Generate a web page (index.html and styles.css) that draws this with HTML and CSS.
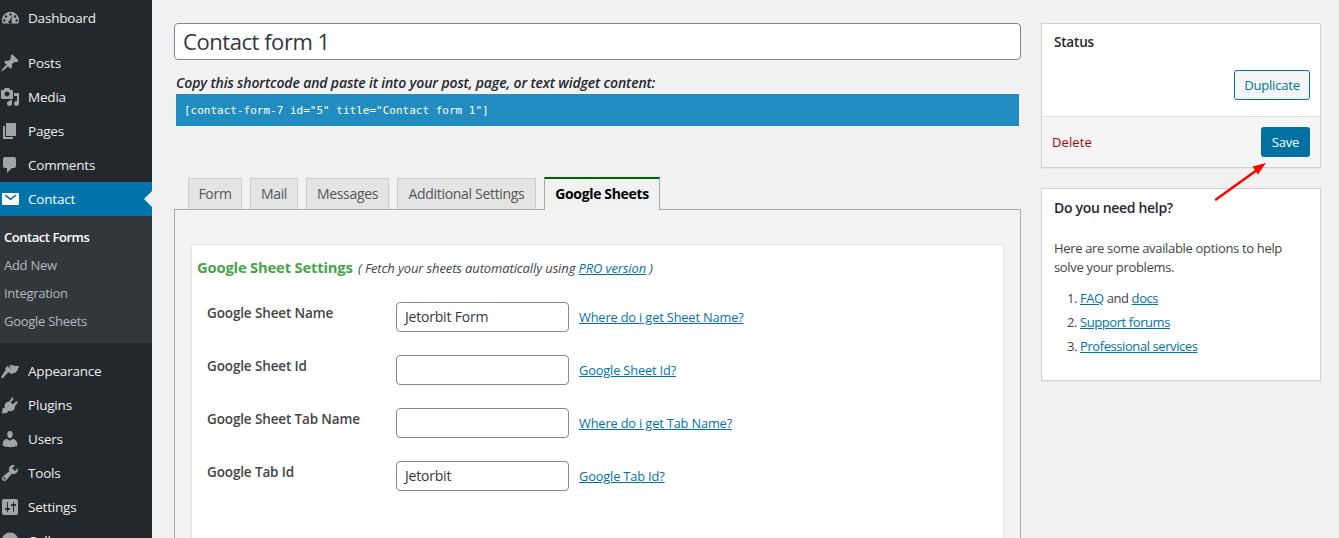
FILE: index.html
```html
<!DOCTYPE html>
<html lang="en">
<head>
<meta charset="utf-8">
<title>Edit Contact Form</title>
<link rel="stylesheet" href="styles.css">
</head>
<body>
<div class="page">
  <nav class="sidebar">
    <ul class="menu menu-dash">
      <li class="item"><svg class="ico" viewBox="0 0 20 20"><path fill-rule="evenodd" d="M2.600 15.500A8.500 8.500 0 1 1 18.400 15.500ZM10.500 5.300a1.200 1.200 0 1 0 0 2.400 1.200 1.200 0 0 0 0-2.400ZM6 7.300a1.200 1.200 0 1 0 0 2.400 1.200 1.200 0 0 0 0-2.400ZM15 7.300a1.200 1.200 0 1 0 0 2.400 1.200 1.200 0 0 0 0-2.400ZM4.300 11.300a1.200 1.200 0 1 0 0 2.400 1.200 1.200 0 0 0 0-2.400ZM16.700 11.300a1.200 1.200 0 1 0 0 2.400 1.200 1.200 0 0 0 0-2.400ZM12.300 7.800 9.600 12.500a1.700 1.700 0 1 0 1.800.5Z"/></svg>Dashboard</li>
    </ul>
    <ul class="menu">
      <li class="item"><svg class="ico" viewBox="0 0 20 20"><path d="M10.440 3.020l1.820-1.820 6.360 6.350-1.830 1.820c-1.050-.68-2.480-.57-3.410.36l-.75.75c-.92.93-1.040 2.350-.35 3.410l-1.830 1.820-2.410-2.410-2.800 2.790c-.42.42-3.380 2.710-3.800 2.290s1.860-3.390 2.280-3.810l2.790-2.790L4.100 9.360l1.830-1.820c1.050.69 2.480.57 3.400-.36l.75-.75c.93-.92 1.050-2.350.36-3.410z"/></svg>Posts</li>
      <li class="item"><svg class="ico" viewBox="0 0 20 20"><path d="M13 11V4c0-.55-.45-1-1-1h-1.670L9 1H5L3.670 3H2c-.55 0-1 .45-1 1v7c0 .55.45 1 1 1h10c.55 0 1-.45 1-1zM7 4.500c1.380 0 2.500 1.120 2.500 2.500S8.380 9.500 7 9.500 4.500 8.380 4.500 7 5.620 4.500 7 4.500zM14 6h5v10.500c0 1.380-1.120 2.500-2.500 2.500S14 17.880 14 16.500s1.120-2.500 2.500-2.500c.17 0 .34.02.5.05V9h-3V6zm-4 8.050V13h2v3.500c0 1.380-1.120 2.500-2.500 2.500S7 17.880 7 16.500 8.120 14 9.500 14c.17 0 .34.02.5.05z"/></svg>Media</li>
      <li class="item"><svg class="ico" viewBox="0 0 20 20"><path d="M6 15V2h10v13H6zm-1 1h8v2H3V5h2v11z"/></svg>Pages</li>
      <li class="item"><svg class="ico" viewBox="0 0 20 20"><path d="M5 2h9c1.100 0 2 .9 2 2v7c0 1.100-.9 2-2 2h-2l-5 5v-5H5c-1.100 0-2-.9-2-2V4c0-1.100.9-2 2-2z"/></svg>Comments</li>
      <li class="item item-active"><svg class="ico" viewBox="0 0 20 20"><path fill-rule="evenodd" d="M3 4h15a1 1 0 0 1 1 1v10a1 1 0 0 1-1 1H3a1 1 0 0 1-1-1V5a1 1 0 0 1 1-1ZM4.700 6.700 10.500 11.200 16.300 6.700 15.500 5.600 10.500 9.300 5.500 5.600Z"/></svg>Contact<span class="notch"></span></li>
    </ul>
    <ul class="submenu">
      <li class="sub sub-current">Contact Forms</li>
      <li class="sub">Add New</li>
      <li class="sub">Integration</li>
      <li class="sub">Google Sheets</li>
    </ul>
    <ul class="menu menu-lower">
      <li class="item"><svg class="ico" viewBox="0 0 20 20"><path d="M9 3.500l1.500 1 2.500-.5 1 1 2-.3 3.500.8-2 2.500.5 1.500-1.500.5-.5 1.500-1 .5-1.500-.5-1 2zM7.800 5l5.200 6.500-2 1.500-2.500-2L2.500 17.500 1 16l5-7.500-1-1z"/></svg>Appearance</li>
      <li class="item"><svg class="ico" viewBox="0 0 20 20"><path d="M12.200 2.300 13.800 3.500 10.700 7.500 13 9.300 16.500 6 18 7.300 14.800 11.500c.5 2-1 4-3 4.600-1.300.4-2.500.2-3.500-.4L7 18 2 18.500 2.500 13.500 5 12.400c-.6-1.200-.5-2.700.3-3.900C6 7.500 7 7 8 6.800L9 6.800Z"/></svg>Plugins</li>
      <li class="item"><svg class="ico" viewBox="0 0 20 20"><path d="M10 9.250c-2.270 0-2.730-3.440-2.730-3.440C7 4.020 7.820 2 9.970 2c2.160 0 2.980 2.020 2.710 3.810 0 0-.41 3.440-2.680 3.440zm0 2.570L12.720 10c2.390 0 4.520 2.330 4.520 4.530v2.490s-3.650 1.130-7.240 1.130c-3.650 0-7.240-1.130-7.240-1.130v-2.490c0-2.250 1.940-4.480 4.150-4.480z"/></svg>Users</li>
      <li class="item"><svg class="ico" viewBox="0 0 20 20"><path d="M16.680 9.770c-1.340 1.340-3.300 1.670-4.950.99l-5.410 6.520c-.99.99-2.590.99-3.580 0s-.99-2.590 0-3.570l6.520-5.420c-.68-1.650-.35-3.610.99-4.950 1.280-1.280 3.120-1.620 4.720-1.060l-2.890 2.890 2.820 2.820 2.860-2.870c.53 1.580.18 3.400-1.080 4.670zM3.810 16.210c.4.390 1.040.39 1.430 0 .4-.4.4-1.040 0-1.430-.39-.4-1.030-.4-1.430 0-.39.39-.39 1.030 0 1.430z"/></svg>Tools</li>
      <li class="item"><svg class="ico" viewBox="0 0 20 20"><path d="M18 16V4c0-1.100-.9-2-2-2H4c-1.100 0-2 .9-2 2v12c0 1.100.9 2 2 2h12c1.100 0 2-.9 2-2zM8 11h1c.55 0 1 .45 1 1s-.45 1-1 1H8v1.500c0 .28-.22.5-.5.5s-.5-.22-.5-.5V13H6c-.55 0-1-.45-1-1s.45-1 1-1h1V5.500c0-.28.22-.5.5-.5s.5.22.5.5V11zm5-2h-1c-.55 0-1-.45-1-1s.45-1 1-1h1V5.500c0-.28.22-.5.5-.5s.5.22.5.5V7h1c.55 0 1 .45 1 1s-.45 1-1 1h-1v5.500c0 .28-.22.5-.5.5s-.5-.22-.5-.5V9z"/></svg>Settings</li>
      <li class="item"><svg class="ico" viewBox="0 0 20 20"><circle cx="10" cy="10" r="8.500"/></svg>Collapse</li>
    </ul>
  </nav>

  <main class="content">
    <div class="editor">
      <div class="title-input">Contact form 1</div>
      <p class="hint">Copy this shortcode and paste it into your post, page, or text widget content:</p>
      <div class="shortcode"><code>[contact-form-7 id="5" title="Contact form 1"]</code></div>
      <div class="tabs">
        <span class="tab tab-form">Form</span>
        <span class="tab tab-mail">Mail</span>
        <span class="tab tab-msg">Messages</span>
        <span class="tab tab-add">Additional Settings</span>
        <span class="tab tab-current">Google Sheets</span>
      </div>
      <section class="panel">
        <div class="sheet">
          <h2 class="sheet-head"><span class="sheet-title">Google Sheet Settings</span> <span class="sheet-note">( Fetch your sheets automatically using <a href="#">PRO version</a> )</span></h2>
          <div class="row"><label>Google Sheet Name</label><span class="field">Jetorbit Form</span><a href="#">Where do i get Sheet Name?</a></div>
          <div class="row"><label>Google Sheet Id</label><span class="field"></span><a href="#">Google Sheet Id?</a></div>
          <div class="row"><label>Google Sheet Tab Name</label><span class="field"></span><a href="#">Where do i get Tab Name?</a></div>
          <div class="row"><label>Google Tab Id</label><span class="field">Jetorbit</span><a href="#">Google Tab Id?</a></div>
        </div>
      </section>
    </div>

    <aside class="side">
      <div class="box box-status">
        <h3 class="box-title">Status</h3>
        <div class="dup-row"><span class="btn btn-dup">Duplicate</span></div>
        <div class="actions"><a class="delete" href="#">Delete</a><span class="btn btn-save">Save</span></div>
      </div>
      <div class="box box-help">
        <h3 class="box-title box-title-help">Do you need help?</h3>
        <p class="help-text">Here are some available options to help solve your problems.</p>
        <ol class="help-list">
          <li><a href="#">FAQ</a> and <a href="#">docs</a></li>
          <li><a href="#">Support forums</a></li>
          <li><a href="#">Professional services</a></li>
        </ol>
      </div>
      <svg class="arrow" viewBox="0 0 60 50"><path d="M5 45.500 46 16" stroke="#f00" stroke-width="2.500" stroke-linecap="round" fill="none"/><path d="M55 9 41.500 12.500 47 20.500Z" fill="#f00"/></svg>
    </aside>
  </main>
</div>
</body>
</html>
```
FILE: styles.css
```css
* { box-sizing: border-box; }
html, body { margin: 0; height: 538px; overflow: hidden; }
body { background: #f1f1f1; color: #444; font-family: "Open Sans", "Noto Sans", sans-serif; font-size: 13px; letter-spacing: -0.2px; }
a { color: #0073aa; }
ul, ol { margin: 0; padding: 0; list-style: none; }
.page { display: flex; height: 538px; }

.sidebar { width: 152px; flex: none; background: #23282d; color: #eee; height: 538px; overflow: hidden; font-size: 13.500px; }
.menu-dash { margin-top: 1px; margin-bottom: 11px; }
.item { position: relative; display: flex; align-items: center; height: 34px; padding-left: 28px; color: #eee; }
.ico { position: absolute; left: 0; top: 7px; width: 20px; height: 20px; fill: #a0a5aa; }
.item-active { background: #0073aa; color: #fff; }
.item-active .ico { fill: #fff; }
.notch { position: absolute; right: 0; top: 9px; border: 8px solid transparent; border-right-color: #f1f1f1; border-left-width: 0; }
.submenu { background: #32373c; padding: 7px 0 7px; height: 127px; }
.sub { height: 28px; line-height: 28px; padding-left: 4px; color: #b4b9be; font-size: 13px; letter-spacing: -0.28px; }
.sub-current { color: #fff; font-weight: 600; letter-spacing: -0.45px; }
.menu-lower { margin-top: 11px; }

.content { flex: 1; display: flex; gap: 20px; padding: 23px 18px 0 22px; min-width: 0; }
.editor { width: 847px; flex: none; }
.title-input { height: 37px; background: #fff; border: 1px solid #7e8993; border-radius: 4px; padding: 0 8px; font-size: 22px; line-height: 35px; color: #32373c; letter-spacing: -0.45px; }
.hint { margin: 13px 0 0 2px; font-size: 14px; line-height: 19px; font-style: italic; font-weight: 600; color: #23282d; letter-spacing: -0.13px; }
.shortcode { margin: 2px 2px 0 2px; height: 32px; background: #218cc0; color: #fff; padding: 0 8px; display: flex; align-items: center; }
.shortcode code { font-family: "DejaVu Sans Mono", monospace; font-size: 11px; letter-spacing: 0; }

.tabs { display: flex; gap: 8px; padding-left: 14px; margin-top: 52px; height: 31px; position: relative; }
.tab { height: 31px; background: #e4e4e4; border: 1px solid #ccc; border-bottom: none; text-align: center; line-height: 30px; font-size: 14px; color: #555; letter-spacing: -0.32px; }
.tab-form { width: 54px; }
.tab-mail { width: 48px; }
.tab-msg { width: 83px; }
.tab-add { width: 139px; }
.tab-current { width: 116px; height: 33px; margin-top: -1px; background: #f1f1f1; border: 1px solid #aaa; border-top: 2px solid #006400; border-bottom: none; font-weight: 700; color: #000; line-height: 30px; z-index: 1; letter-spacing: -0.35px; }
.panel { border: 1px solid #aaa; border-bottom: none; background: #f3f3f3; height: 340px; padding: 34px 16px 0; }
.sheet { background: #fff; border: 1px solid #e5e5e5; height: 310px; padding: 0 5px; }
.sheet-head { margin: 12px 0 0; font-size: 14px; line-height: 20px; font-weight: 400; }
.sheet-title { color: #46a54b; font-weight: 700; font-size: 14.800px; margin-right: 2px; letter-spacing: -0.2px; }
.sheet-note { font-size: 13px; font-style: italic; color: #444; letter-spacing: -0.12px; }
.row { display: flex; align-items: flex-start; height: 53px; padding-left: 10px; }
.sheet-head + .row { margin-top: 24px; }
.row label { width: 189px; flex: none; font-weight: 600; line-height: 20px; margin-top: 1px; font-size: 13.500px; color: #444; letter-spacing: -0.13px; }
.field { width: 173px; height: 30px; flex: none; background: #fff; border: 1px solid #7e8993; border-radius: 4px; padding: 0 8px; line-height: 28px; font-size: 14px; color: #32373c; }
.row a { margin-left: 10px; line-height: 30px; font-size: 12.800px; letter-spacing: -0.15px; }

.side { position: relative; width: 280px; flex: none; font-size: 13px; }
.box { background: #fff; border: 1px solid #ccd0d4; box-shadow: 0 1px 1px rgba(0,0,0,.04); }
.box-status { height: 145px; display: flex; flex-direction: column; }
.box-title { margin: 0; padding: 10px 12px 0; font-size: 13.500px; line-height: 16px; font-weight: 600; color: #23282d; }
.dup-row { display: flex; justify-content: flex-end; padding: 20px 10px 0; flex: 1; }
.btn { display: inline-flex; align-items: center; justify-content: center; height: 30px; border-radius: 3px; font-size: 13px; }
.btn-dup { width: 76px; background: #f3f5f6; border: 1px solid #0071a1; color: #0071a1; }
.actions { display: flex; justify-content: space-between; align-items: center; height: 51px; background: #f5f5f5; border-top: 1px solid #ddd; padding: 0 10px; }
.delete { color: #a00; text-decoration: none; letter-spacing: 0.1px; }
.btn-save { width: 49px; background: #0071a1; color: #fff; }
.box-help { margin-top: 20px; height: 193px; padding: 10px 12px 0; }
.box-title-help { padding: 0; line-height: 18px; font-size: 14px; letter-spacing: -0.32px; }
.help-text { margin: 22px 0 0; line-height: 19px; color: #444; letter-spacing: -0.33px; }
.help-list { margin: 12px 0 0; padding-left: 26px; list-style: decimal; letter-spacing: -0.42px; }
.help-list li { line-height: 19px; margin-bottom: 5px; }
.arrow { position: absolute; left: 170px; top: 131px; width: 60px; height: 50px; }
```
